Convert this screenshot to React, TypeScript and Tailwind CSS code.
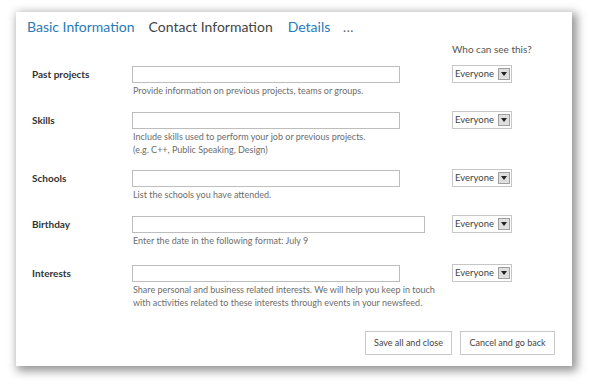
import React from "react";

const font = { fontFamily: 'Lato, "Open Sans", sans-serif' };

function Select() {
  return (
    <div className="flex h-[18px] w-[60px] items-stretch border border-[#c6c6c6] bg-white">
      <div className="flex flex-1 items-center pl-[2px] text-[9.5px] leading-none text-[#444]">Everyone</div>
      <div className="my-[2px] mr-[1px] flex w-[12px] items-center justify-center border border-[#9f9f9f] bg-[#dedede]">
        <svg width="6" height="4" viewBox="0 0 6 4">
          <path d="M0 0H6L3 4Z" fill="#222" />
        </svg>
      </div>
    </div>
  );
}

type Row = { label: string; help: React.ReactNode; wide?: boolean; mt: string };

const rows: Row[] = [
  { label: "Past projects", help: "Provide information on previous projects, teams or groups.", mt: "mt-0" },
  {
    label: "Skills",
    help: (
      <>
        Include skills used to perform your job or previous projects.
        <br />
        (e.g. C++, Public Speaking, Design)
      </>
    ),
    mt: "mt-[15px]",
  },
  { label: "Schools", help: "List the schools you have attended.", mt: "mt-[14px]" },
  { label: "Birthday", help: "Enter the date in the following format: July 9", wide: true, mt: "mt-[15px]" },
  {
    label: "Interests",
    help: (
      <>
        Share personal and business related interests. We will help you keep in touch
        <br />
        with activities related to these interests through events in your newsfeed.
      </>
    ),
    mt: "mt-[18px]",
  },
];

export default function App() {
  return (
    <div className="h-[389px] w-[590px] bg-white pl-[16px] pt-[12px]" style={font}>
      <div className="h-[354px] w-[556px] bg-white shadow-[3px_3px_9px_2px_rgba(0,0,0,0.42)]">
        <div className="flex h-[30px] items-center pl-[11px] text-[14px] leading-[20px]">
          <span className="text-[#2a7ab9]">Basic Information</span>
          <span className="ml-[14px] text-[#444]">Contact Information</span>
          <span className="ml-[15px] text-[#2a7ab9]">Details</span>
          <span className="ml-[13px] text-[11px] font-bold leading-none tracking-[1px] text-[#666]">...</span>
        </div>
        <div className="h-[24px] pl-[436px] text-[10px] leading-[14px] text-[#555]">Who can see this?</div>
        <div>
          {rows.map((r) => (
            <div key={r.label} className={`flex ${r.mt}`}>
              <div className="w-[116px] pl-[16px] pt-[1px] text-[10px] font-bold leading-[14px] text-[#333]">{r.label}</div>
              <div className="w-[320px]">
                <div className={`h-[17px] border border-[#bdbdbd] bg-white ${r.wide ? "w-[293px]" : "w-[268px]"}`} />
                <div className="mt-[1px] whitespace-nowrap pl-[1px] text-[9px] leading-[13px] text-[#6d6d6d]">{r.help}</div>
              </div>
              <div className="-mt-[1px]">
                <Select />
              </div>
            </div>
          ))}
        </div>
        <div className="mt-[22px] flex justify-end gap-[8px] pr-[17px]">
          <button className="h-[24px] w-[87px] border border-[#c8c8c8] bg-white text-[9px] text-[#444]">Save all and close</button>
          <button className="h-[24px] w-[95px] border border-[#c8c8c8] bg-white text-[9px] text-[#444]">Cancel and go back</button>
        </div>
      </div>
    </div>
  );
}
